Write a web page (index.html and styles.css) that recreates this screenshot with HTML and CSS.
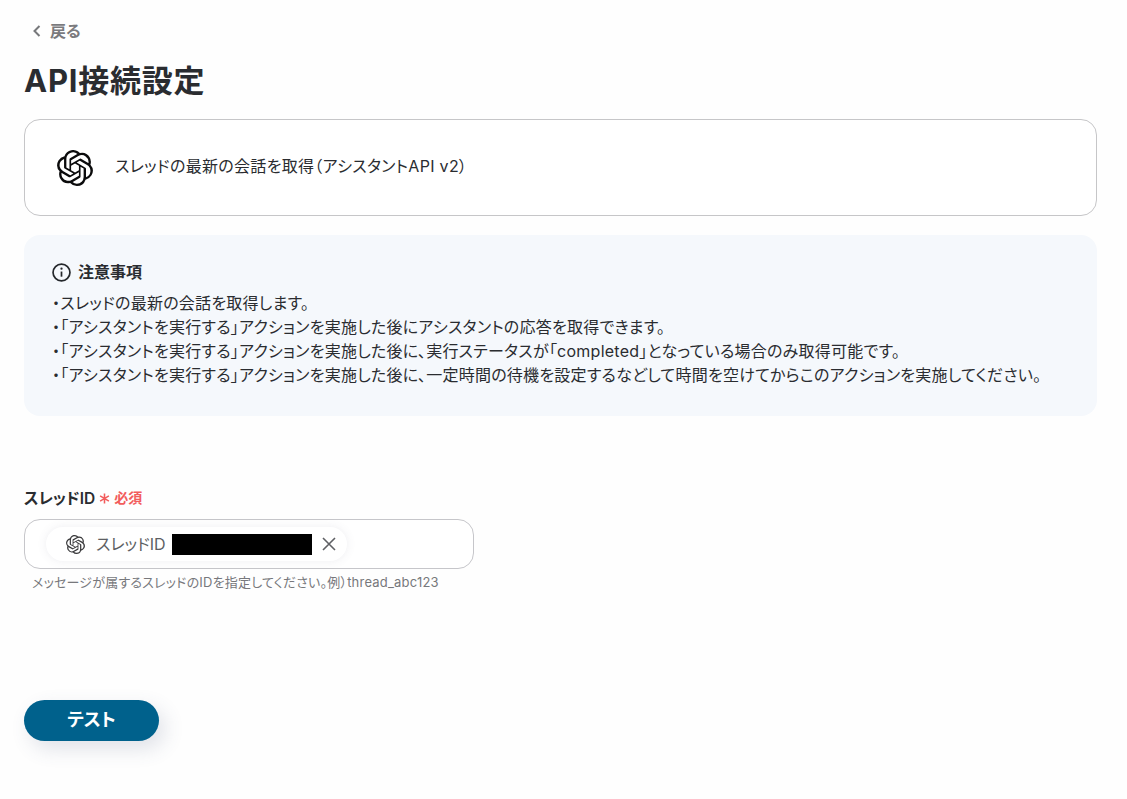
FILE: index.html
```html
<!DOCTYPE html>
<html lang="ja">
<head>
<meta charset="utf-8">
<title>API接続設定</title>
<link rel="stylesheet" href="styles.css">
</head>
<body>
<svg class="defs" width="0" height="0" aria-hidden="true">
  <symbol id="openai" viewBox="0 0 24 24">
    <path d="M22.2819 9.8211a5.9847 5.9847 0 0 0-.5157-4.9108 6.0462 6.0462 0 0 0-6.5098-2.9A6.0651 6.0651 0 0 0 4.9807 4.1818a5.9847 5.9847 0 0 0-3.9977 2.9 6.0462 6.0462 0 0 0 .7427 7.0966 5.98 5.98 0 0 0 .511 4.9107 6.051 6.051 0 0 0 6.5146 2.9001A5.9847 5.9847 0 0 0 13.2599 24a6.0557 6.0557 0 0 0 5.7718-4.2058 5.9894 5.9894 0 0 0 3.9977-2.9001 6.0557 6.0557 0 0 0-.7475-7.0729zm-9.022 12.6081a4.4755 4.4755 0 0 1-2.8764-1.0408l.1419-.0804 4.7783-2.7582a.7948.7948 0 0 0 .3927-.6813v-6.7369l2.02 1.1686a.071.071 0 0 1 .038.052v5.5826a4.504 4.504 0 0 1-4.4945 4.4944zm-9.6607-4.1254a4.4708 4.4708 0 0 1-.5346-3.0137l.142.0852 4.783 2.7582a.7712.7712 0 0 0 .7806 0l5.8428-3.3685v2.3324a.0804.0804 0 0 1-.0332.0615L9.74 19.9502a4.4992 4.4992 0 0 1-6.1408-1.6464zM2.3408 7.8956a4.485 4.485 0 0 1 2.3655-1.9728V11.6a.7664.7664 0 0 0 .3879.6765l5.8144 3.3543-2.0201 1.1685a.0757.0757 0 0 1-.071 0l-4.8303-2.7865A4.504 4.504 0 0 1 2.3408 7.872zm16.5963 3.8558L13.1038 8.364 15.1192 7.2a.0757.0757 0 0 1 .071 0l4.8303 2.7913a4.4944 4.4944 0 0 1-.6765 8.1042v-5.6772a.79.79 0 0 0-.407-.667zm2.0107-3.0231l-.142-.0852-4.7735-2.7818a.7759.7759 0 0 0-.7854 0L9.409 9.2297V6.8974a.0662.0662 0 0 1 .0284-.0615l4.8303-2.7866a4.4992 4.4992 0 0 1 6.6802 4.66zM8.3065 12.863l-2.02-1.1638a.0804.0804 0 0 1-.038-.0567V6.0742a4.4992 4.4992 0 0 1 7.3757-3.4537l-.142.0805L8.704 5.459a.7948.7948 0 0 0-.3927.6813zm1.0976-2.3654l2.602-1.4998 2.6069 1.4998v2.9994l-2.5974 1.4997-2.6067-1.4997Z"/>
  </symbol>
</svg>
<main class="page">
  <a class="back">
    <svg class="back-icon" viewBox="0 0 12 14" aria-hidden="true"><path d="M8.5 2 3.5 7l5 5"/></svg>
    <span>戻る</span>
  </a>
  <h1 class="title">API接続設定</h1>

  <section class="action-card">
    <svg class="logo-lg" aria-hidden="true"><use href="#openai"/></svg>
    <p class="action-name">スレッドの最新の会話を取得（アシスタントAPI v2）</p>
  </section>

  <section class="notice">
    <h2 class="notice-head">
      <svg class="info-icon" viewBox="0 0 20 20" aria-hidden="true">
        <circle cx="10" cy="10" r="8.9"/>
        <path d="M10 9v5.4"/>
        <circle class="dot" cx="10" cy="6" r="1.2"/>
      </svg>
      注意事項
    </h2>
    <ul class="notice-list">
      <li>・スレッドの最新の会話を取得します。</li>
      <li>・「アシスタントを実行する」アクションを実施した後にアシスタントの応答を取得できます。</li>
      <li>・「アシスタントを実行する」アクションを実施した後に、実行ステータスが「completed」となっている場合のみ取得可能です。</li>
      <li>・「アシスタントを実行する」アクションを実施した後に、一定時間の待機を設定するなどして時間を空けてからこのアクションを実施してください。</li>
    </ul>
  </section>

  <section class="field">
    <div class="field-label">
      <span class="label-text">スレッドID</span>
      <span class="required">
        <svg class="asterisk" viewBox="0 0 12 12" aria-hidden="true"><path d="M6 .5v11M1.2 3.2l9.6 5.6M10.8 3.2l-9.6 5.6"/></svg>
        必須
      </span>
    </div>
    <div class="input-box">
      <div class="chip">
        <svg class="logo-sm" aria-hidden="true"><use href="#openai"/></svg>
        <span class="chip-text">スレッドID</span>
        <span class="redacted"></span>
        <svg class="close-icon" viewBox="0 0 14 14" aria-hidden="true"><path d="M1 1l12 12M13 1 1 13"/></svg>
      </div>
    </div>
    <p class="hint">メッセージが属するスレッドのIDを指定してください。例）thread_abc123</p>
  </section>

  <button class="test-btn" type="button">テスト</button>
</main>
</body>
</html>
```
FILE: styles.css
```css
* { box-sizing: border-box; }
html, body { margin: 0; padding: 0; }
body {
  background: #fefefe;
  color: #2a2c30;
  font-family: Inter, "Noto Sans CJK JP", sans-serif;
  font-feature-settings: "palt";
}
.defs { position: absolute; }
.page {
  width: 1127px;
  height: 799px;
  padding: 21px 30px 0 24px;
  overflow: hidden;
}
.back {
  display: flex;
  align-items: center;
  gap: 7px;
  height: 20px;
  padding-left: 7px;
  color: #7a7a7d;
  font-size: 16px;
  font-weight: 600;
  line-height: 20px;
}
.back-icon { width: 12px; height: 14px; fill: none; stroke: #77787b; stroke-width: 2; }
.title {
  margin: 18px 0 16px;
  font-size: 31px;
  font-weight: 700;
  line-height: 44px;
  letter-spacing: 0.75px;
}
.action-card {
  display: flex;
  align-items: center;
  gap: 22px;
  height: 97px;
  padding: 0 0 0 32px;
  border: 1px solid #c6c6c8;
  border-radius: 16px;
  background: #fff;
}
.logo-lg { width: 36px; height: 36px; fill: #0b0b0c; flex: none; }
.action-name { margin: 0 0 4px; font-size: 16px; line-height: 24px; letter-spacing: 0.3px; }
.notice {
  height: 181px;
  margin-top: 19px;
  padding: 25px 28px 0;
  border-radius: 16px;
  background: #f5f8fc;
}
.notice-head {
  display: flex;
  align-items: center;
  gap: 7px;
  margin: 0 0 7px;
  font-size: 16px;
  font-weight: 700;
  line-height: 24px;
}
.info-icon { width: 19px; height: 19px; fill: none; stroke: #24272b; stroke-width: 1.8; }
.info-icon .dot { fill: #24272b; stroke: none; }
.notice-list { margin: 0; padding: 0; list-style: none; font-size: 16px; line-height: 24px; letter-spacing: 0.25px; }
.field { margin-top: 69px; width: 450px; }
.field-label { display: flex; align-items: center; gap: 4px; height: 24px; }
.label-text { font-size: 15.5px; font-weight: 600; }
.required { display: flex; align-items: center; gap: 4px; color: #f25c5c; font-size: 14px; font-weight: 600; }
.asterisk { width: 11px; height: 11px; margin-top: 3px; fill: none; stroke: #f25c5c; stroke-width: 1.7; }
.input-box {
  display: flex;
  align-items: center;
  height: 50px;
  margin-top: 10px;
  padding-left: 21px;
  border: 1px solid #c6c6ca;
  border-radius: 16px;
  background: #fff;
}
.chip {
  display: flex;
  align-items: center;
  height: 34px;
  padding: 0 11px 0 20px;
  border-radius: 17px;
  background: #fff;
  box-shadow: 0 0 10px rgba(90, 90, 120, 0.1);
  color: #5d5f63;
  font-size: 16px;
}
.logo-sm { width: 19px; height: 19px; fill: #3a3a3c; flex: none; margin-right: 11px; }
.chip-text { margin: 0 6px 3px 0; }
.redacted { width: 140px; height: 21px; background: #000; }
.close-icon { width: 14px; height: 14px; margin-left: 10px; fill: none; stroke: #5f6064; stroke-width: 1.6; }
.hint { margin: 3px 0 0 8px; color: #77787c; font-size: 13px; line-height: 20px; letter-spacing: 0.2px; }
.test-btn {
  display: block;
  width: 135px;
  height: 41px;
  margin-top: 108px;
  padding: 0 0 5px;
  border: 0;
  border-radius: 21px;
  background: #00618c;
  box-shadow: 6px 8px 20px rgba(70, 80, 120, 0.16);
  color: #fff;
  font-family: inherit;
  font-feature-settings: inherit;
  font-size: 18px;
  font-weight: 700;
}
```
